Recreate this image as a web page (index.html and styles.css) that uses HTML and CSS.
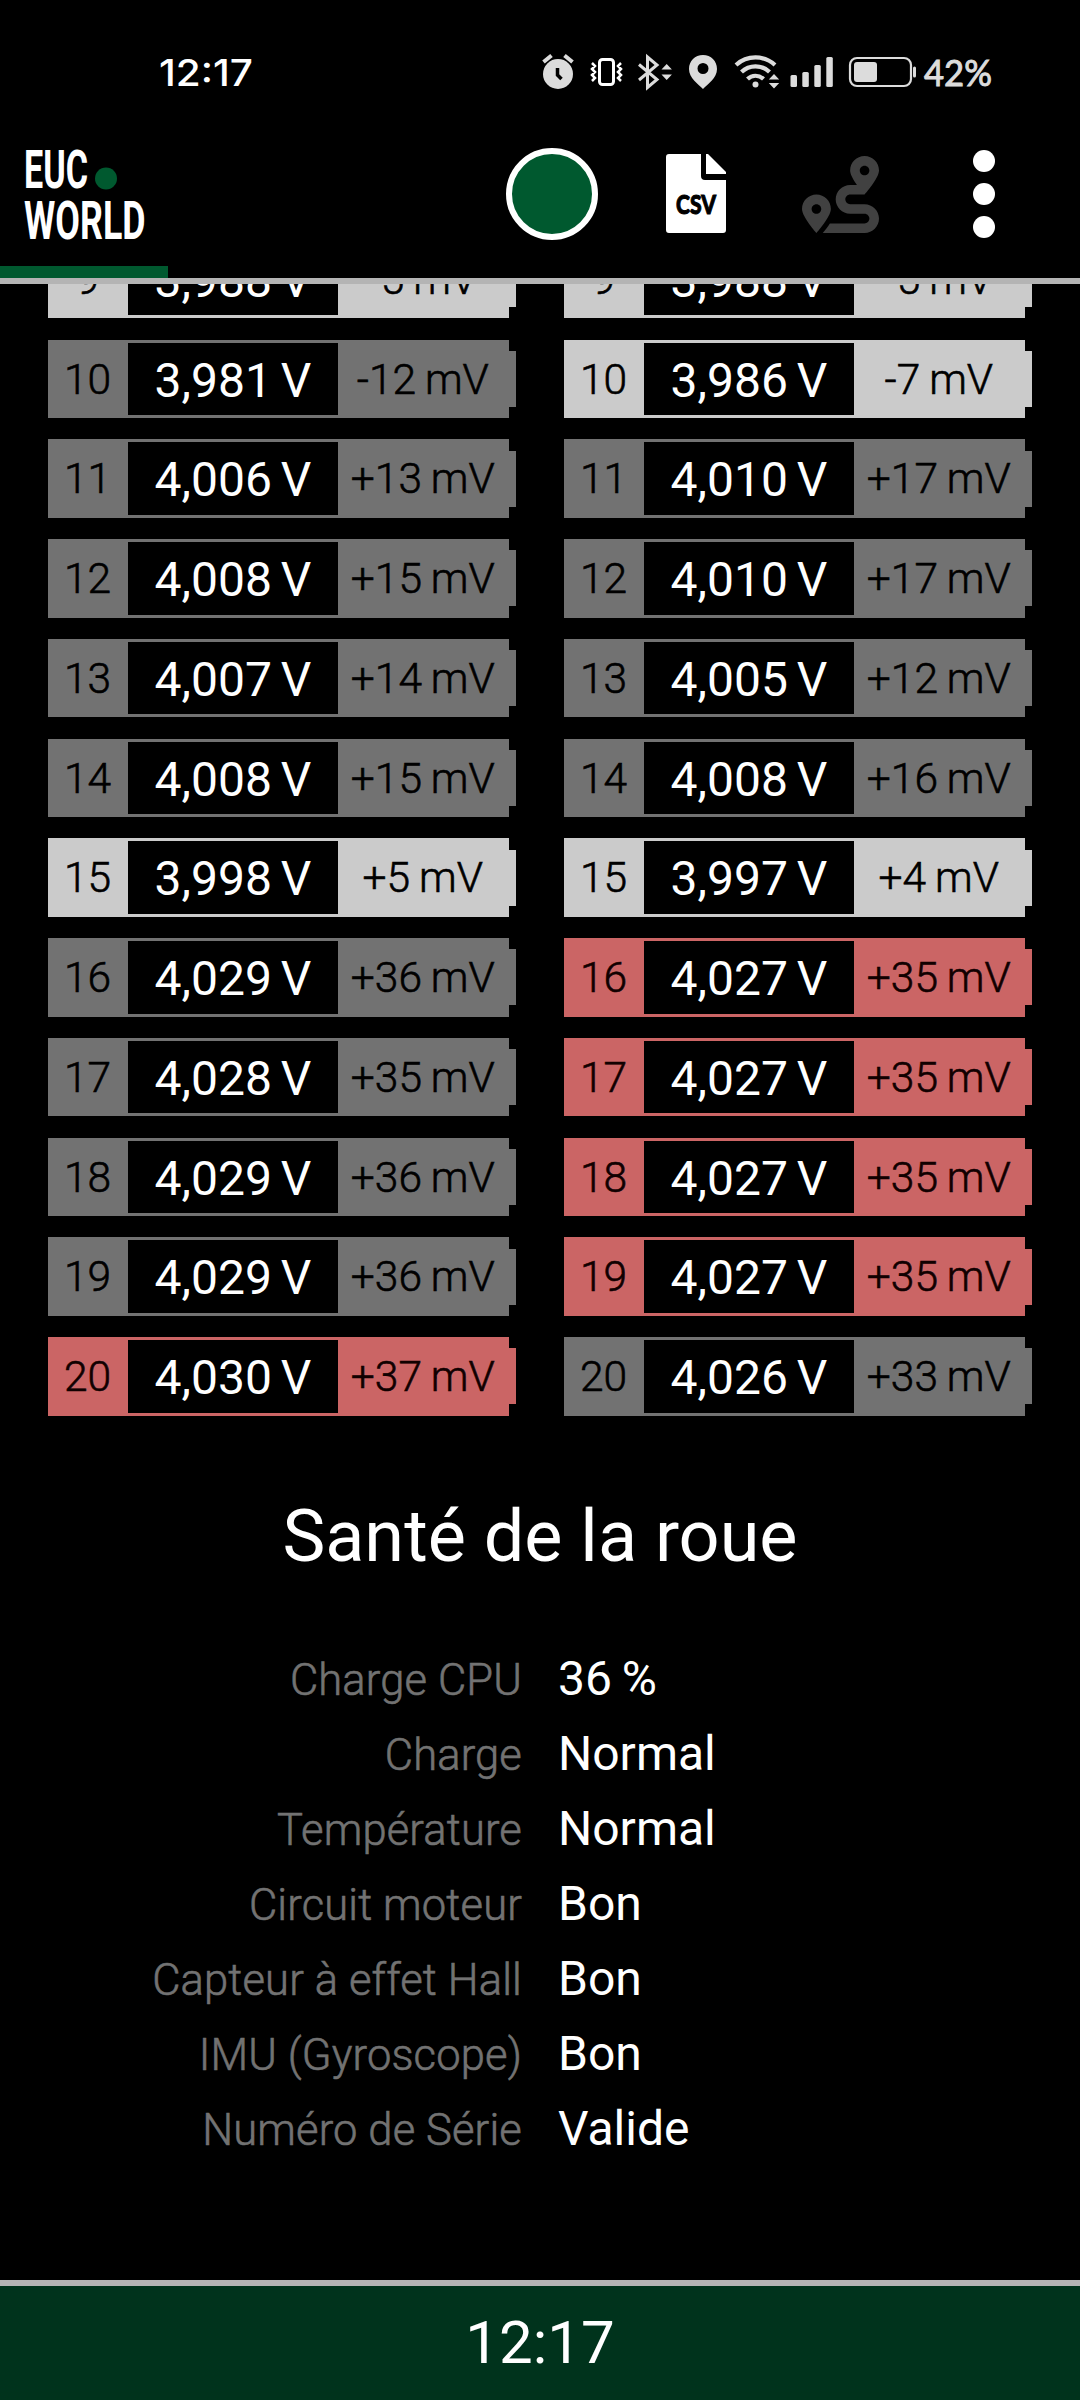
FILE: index.html
```html
<!DOCTYPE html>
<html lang="fr">
<head>
<meta charset="utf-8">
<title>EUC World</title>
<link rel="stylesheet" href="styles.css">
</head>
<body>
<header class="statusbar">
  <svg class="status-svg" viewBox="0 0 1080 130" width="1080" height="130">
    <text class="st-time" x="159" y="86" textLength="94" lengthAdjust="spacingAndGlyphs">12:17</text>
    <g fill="#dcdcdc">
      <circle cx="558" cy="74" r="15"/>
      <path d="M543.500 62l8-6.500M572.500 62l-8-6.500" stroke="#dcdcdc" stroke-width="4"/>
      <path d="M557.500 68v7l4 4" stroke="#000" stroke-width="3.500" fill="none"/>
    </g>
    <g fill="none" stroke="#fff">
      <rect x="599.500" y="59.500" width="14" height="25" rx="3" stroke-width="3"/>
      <path d="M592 63l3 3-3 3 3 3-3 3 3 3-3 3M621 63l-3 3 3 3-3 3 3 3-3 3 3 3" stroke-width="2.500"/>
    </g>
    <path d="M639 64.500l18 15-9.500 8V57l9.500 8-18 15" fill="none" stroke="#dcdcdc" stroke-width="3"/>
    <path d="M661.500 69.500l5.200-5.500 5.200 5.500zM661.500 74.500l5.200 5.500 5.200-5.500z" fill="#dcdcdc"/>
    <path d="M703 55c-8 0-14 6-14 14 0 9 9 15 14 20 5-5 14-11 14-20 0-8-6-14-14-14zm0 8a5.500 5.500 0 1 1 0 11 5.500 5.500 0 0 1 0-11z" fill="#dcdcdc"/>
    <g fill="none" stroke="#dcdcdc" stroke-width="4.200">
      <path d="M736 65a29 29 0 0 1 39 0M741.500 72a20 20 0 0 1 28 0M747.500 79a11.500 11.500 0 0 1 16 0"/>
    </g>
    <circle cx="755.500" cy="84.500" r="3" fill="#dcdcdc"/>
    <path d="M768.800 79.500l5.200-5.500 5.200 5.500zM768.800 83l5.200 5.500 5.200-5.500z" fill="#dcdcdc"/>
    <g fill="#dcdcdc">
      <rect x="790.500" y="75" width="6.500" height="12" rx="1.500"/>
      <rect x="802.300" y="72" width="6.500" height="15" rx="1.500"/>
      <rect x="814.300" y="65" width="6.500" height="22" rx="1.500"/>
      <rect x="826.300" y="57" width="6.500" height="30" rx="1.500"/>
      <rect x="854" y="62" width="23" height="20" rx="3"/>
      <rect x="913" y="66.500" width="3" height="11" rx="1.500"/>
    </g>
    <rect x="850" y="58" width="61" height="28" rx="7" fill="none" stroke="#dcdcdc" stroke-width="2.200"/>
    <text class="st-batt" x="924" y="85.500" textLength="68" lengthAdjust="spacingAndGlyphs">42%</text>
  </svg>
</header>
<nav class="appbar">
  <svg class="logo" viewBox="0 0 168 136" width="168" height="136">
    <text class="logo-text" x="24" y="58" textLength="64" lengthAdjust="spacingAndGlyphs">EUC</text>
    <circle cx="106" cy="48.500" r="11" fill="#00592f"/>
    <text class="logo-text" x="24" y="109" textLength="121.500" lengthAdjust="spacingAndGlyphs">WORLD</text>
  </svg>
  <div class="progress"></div>
  <span class="record"></span>
  <svg class="csv" viewBox="0 0 60 79" width="60" height="79">
    <path d="M3 0h32v22q0 4 4 4h21v50q0 3-3 3H3q-3 0-3-3V3q0-3 3-3zM40 0h2l18 18v2H40z" fill="#fff"/>
    <text class="csv-text" x="10" y="60" textLength="40" lengthAdjust="spacingAndGlyphs">CSV</text>
  </svg>
  <svg class="route" viewBox="0 0 512 512" width="77" height="77">
    <path fill="#414141" d="M416 320h-96c-17.600 0-32-14.400-32-32s14.400-32 32-32h96s96-107 96-160-43-96-96-96-96 43-96 96c0 25.500 22.200 63.400 45.300 96H320c-52.900 0-96 43.100-96 96s43.100 96 96 96h96c17.600 0 32 14.400 32 32s-14.400 32-32 32H185.500c-16 24.800-33.800 47.700-47.300 64H416c52.900 0 96-43.100 96-96s-43.100-96-96-96zm0-256c17.700 0 32 14.300 32 32s-14.300 32-32 32-32-14.300-32-32 14.300-32 32-32zM96 256c-53 0-96 43-96 96s96 160 96 160 96-107 96-160-43-96-96-96zm0 128c-17.700 0-32-14.300-32-32s14.300-32 32-32 32 14.300 32 32-14.300 32-32 32z"/>
  </svg>
  <div class="menu"><i></i><i></i><i></i></div>
</nav>
<main class="content">
  <div class="cells" id="cells"></div>
  <h1 class="title">Santé de la roue</h1>
  <dl class="health">
    <dt>Charge CPU</dt><dd>36 %</dd>
    <dt>Charge</dt><dd>Normal</dd>
    <dt>Température</dt><dd>Normal</dd>
    <dt>Circuit moteur</dt><dd>Bon</dd>
    <dt>Capteur à effet Hall</dt><dd>Bon</dd>
    <dt>IMU (Gyroscope)</dt><dd>Bon</dd>
    <dt>Numéro de Série</dt><dd>Valide</dd>
  </dl>
</main>
<footer class="clock">12:17</footer>
<script src="cells.js"></script>
</body>
</html>
```
FILE: styles.css
```css
* { box-sizing: border-box; margin: 0; padding: 0; }
body {
  width: 1080px; height: 2400px; overflow: hidden;
  display: flex; flex-direction: column;
  background: #000; color: #fff;
  font-family: Roboto, sans-serif;
}
svg { display: block; }
.statusbar { height: 130px; flex: none; }
.st-time { font: 500 37px Inter, sans-serif; fill: #fff; }
.st-batt { font: 400 37px Lato, sans-serif; fill: #dcdcdc; stroke: #dcdcdc; stroke-width: 1px; }
.appbar {
  position: relative; flex: none; height: 154px;
  display: flex; align-items: flex-start;
  border-bottom: 6px solid #b4b4b4;
}
.logo-text { font: 700 54.500px Roboto, sans-serif; fill: #fff; }
.progress { position: absolute; left: 0; bottom: 0; width: 168px; height: 12px; background: #00592f; }
.record {
  width: 92px; height: 92px; margin: 18px 0 0 338px;
  border: 6px solid #fff; border-radius: 50%; background: #00592f;
}
.csv { margin: 24px 0 0 68px; }
.csv-text { font: 900 27px Lato, sans-serif; fill: #000; stroke: #000; stroke-width: 1px; }
.route { margin: 26px 0 0 76px; }
.menu { display: flex; flex-direction: column; gap: 11px; margin: 20px 0 0 94px; }
.menu i { width: 22px; height: 22px; border-radius: 50%; background: #fff; }
.content { flex: 1; min-height: 0; overflow: hidden; }
.cells {
  display: grid; grid-template-columns: 468px 468px; column-gap: 48px;
  grid-auto-rows: 78.500px; row-gap: 21.250px;
  margin: -44.250px 0 0 48px;
}
.cell {
  --c: #727272;
  display: grid; grid-template-columns: 80px 210px 170.600px 7.400px; grid-template-rows: 100%;
  line-height: 80px; text-align: center; color: #000; font-size: 42.500px; font-weight: 300;
}
.cell.light { --c: #cbcbcb; }
.cell.red { --c: #cb6565; color: #100; }
.cell .num, .cell .diff { background: var(--c); -webkit-text-stroke: .6px currentColor; }
.cell .num { padding-right: 1px; }
.cell .diff { padding-right: 1px; word-spacing: -1.500px; white-space: nowrap; }
.cell .volt {
  color: #fff; font-size: 48px; font-weight: 400; word-spacing: -3px; background: #000;
  border: solid var(--c); border-width: 3px 0; line-height: 76px;
}
.cell .nub { align-self: center; height: 56px; background: var(--c); }
.title { margin-top: 79px; text-align: center; font-weight: 400; font-size: 72px; line-height: 84px; }
.health {
  display: grid; grid-template-columns: 522px 1fr; column-gap: 36px;
  grid-auto-rows: 75px; align-items: baseline; margin-top: 62px;
}
.health dt {
  text-align: right; font-size: 43.500px; font-weight: 300; letter-spacing: .15px;
  line-height: 75px; color: #727272; -webkit-text-stroke: .6px currentColor;
}
.health dd { font-size: 48px; line-height: 75px; word-spacing: -2px; }
.clock {
  flex: none; height: 120px; border-top: 6px solid #b4b4b4;
  background: #00331c; text-align: center; font-size: 60px; line-height: 114px;
}
```
FILE: cells.js
```js
// Each row: cell number, then [voltage, deviation, tone] for both packs.
const rows = [
  [9, ["3,988", "-5", "light"], ["3,988", "-5", "light"]],
  [10, ["3,981", "-12", ""], ["3,986", "-7", "light"]],
  [11, ["4,006", "+13", ""], ["4,010", "+17", ""]],
  [12, ["4,008", "+15", ""], ["4,010", "+17", ""]],
  [13, ["4,007", "+14", ""], ["4,005", "+12", ""]],
  [14, ["4,008", "+15", ""], ["4,008", "+16", ""]],
  [15, ["3,998", "+5", "light"], ["3,997", "+4", "light"]],
  [16, ["4,029", "+36", ""], ["4,027", "+35", "red"]],
  [17, ["4,028", "+35", ""], ["4,027", "+35", "red"]],
  [18, ["4,029", "+36", ""], ["4,027", "+35", "red"]],
  [19, ["4,029", "+36", ""], ["4,027", "+35", "red"]],
  [20, ["4,030", "+37", "red"], ["4,026", "+33", ""]],
];
document.getElementById("cells").innerHTML = rows.map(([n, ...packs]) =>
  packs.map(([v, d, tone]) =>
    `<div class="cell ${tone}"><span class="num">${n}</span><span class="volt">${v} V</span>` +
    `<span class="diff">${d} mV</span><span class="nub"></span></div>`).join("")
).join("");
```
